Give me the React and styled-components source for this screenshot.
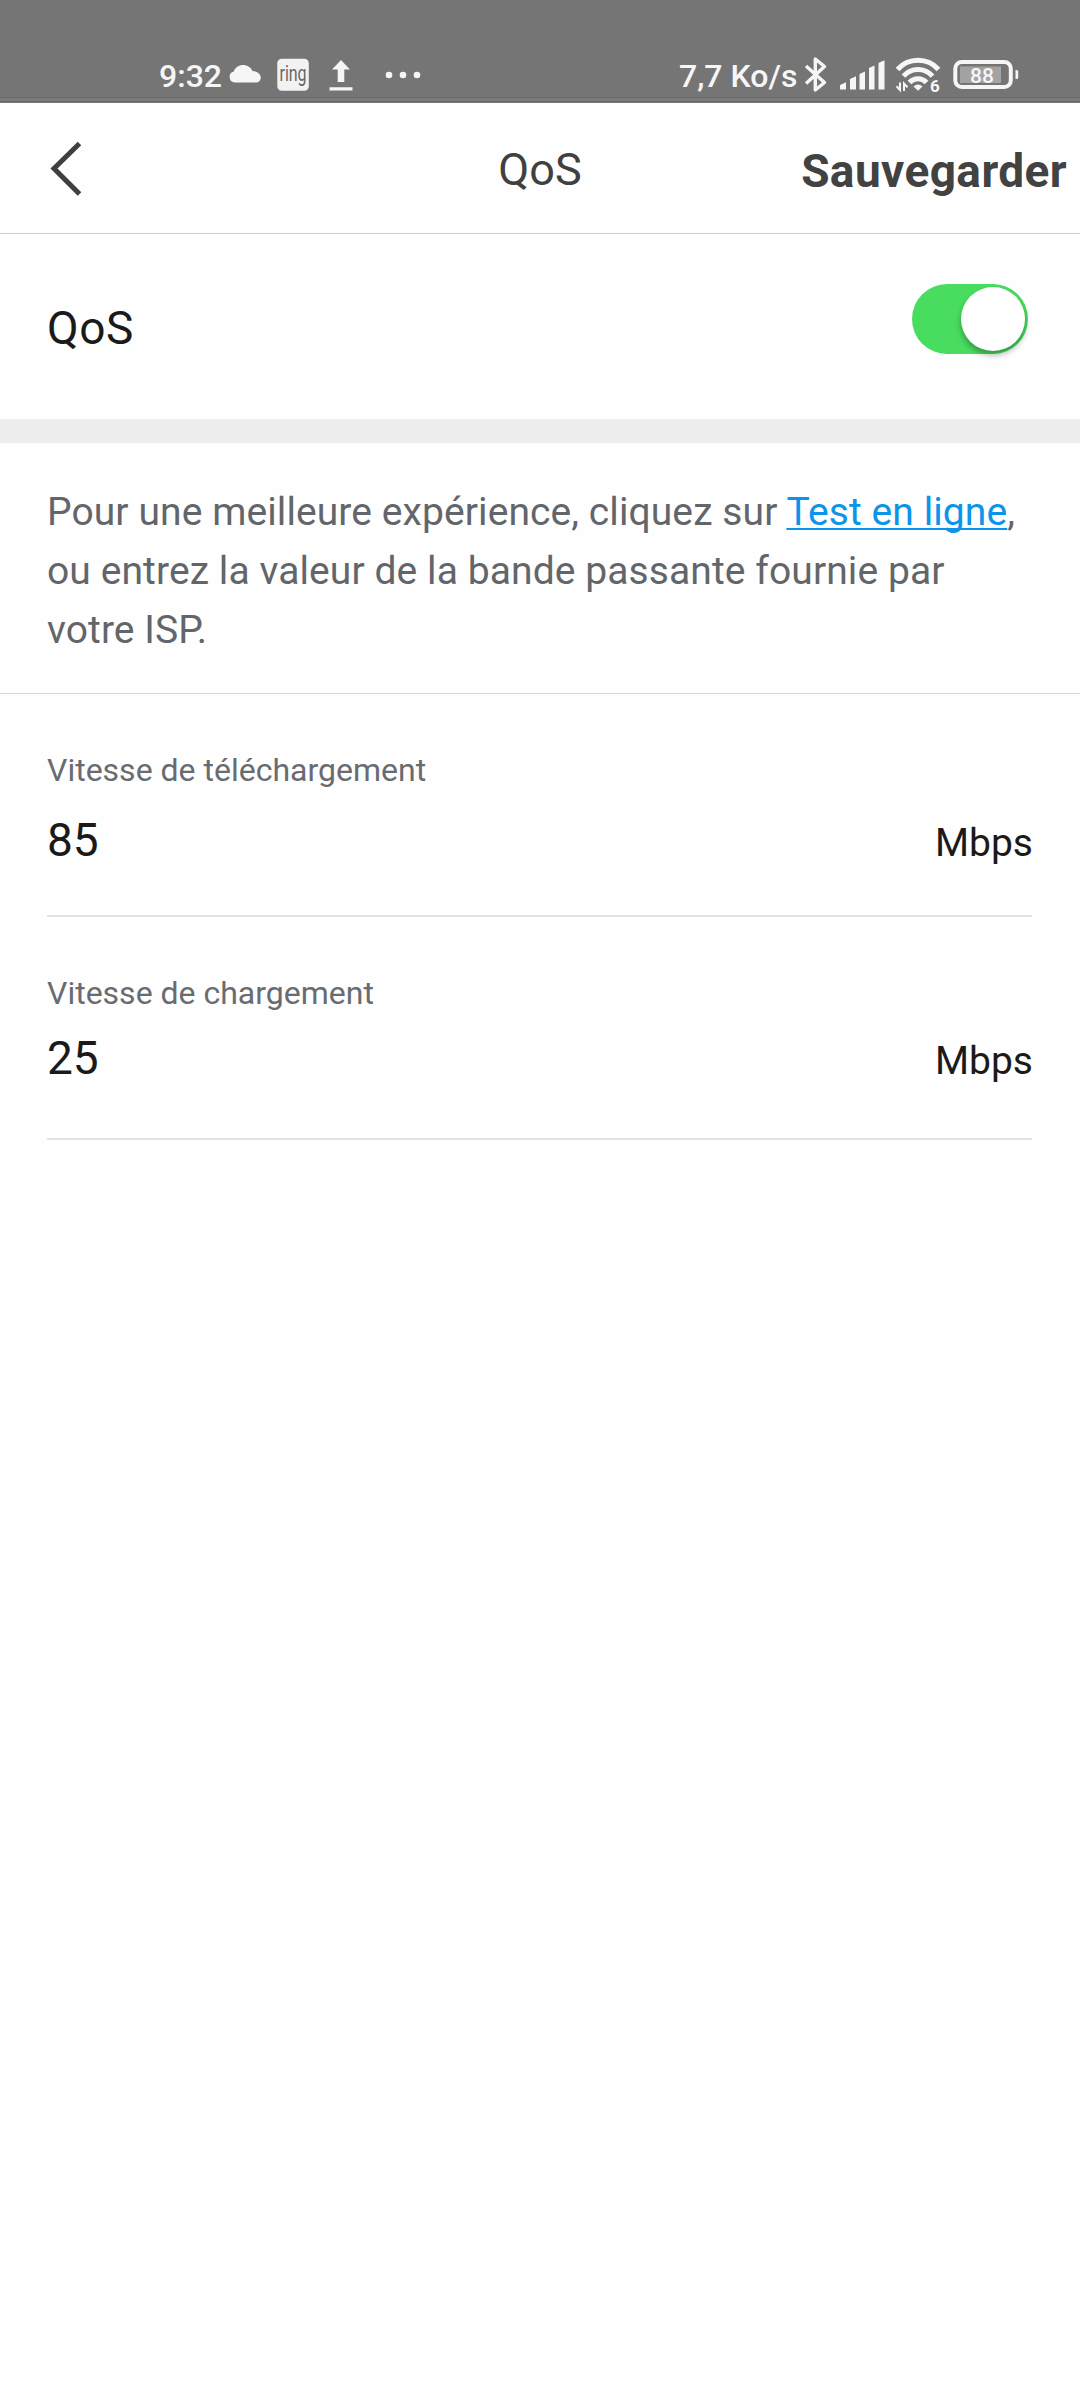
import React, { useState } from "react";
import styled, { createGlobalStyle } from "styled-components";

const GlobalStyle = createGlobalStyle`
  * { box-sizing: border-box; }
  body { margin: 0; background: #fefefe; font-family: Roboto, "Noto Sans", sans-serif; }
`;

const Screen = styled.div`
  display: flex;
  flex-direction: column;
  width: 1080px;
  height: 2400px;
  background: #fefefe;
`;

const StatusBar = styled.header`
  display: flex;
  align-items: flex-start;
  justify-content: space-between;
  height: 103px;
  padding: 0 61px 0 159px;
  color: #f6f6f6;
  background: linear-gradient(#757575 0 97px, #6a6a6a 97px 98px, #7a7a7a 98px 101px, #686868 101px 102px, #777 102px);
`;

const StatusGroup = styled.div`
  display: flex;
  align-items: flex-start;
  height: 100%;
`;

const StatusText = styled.span`
  width: ${({ $width }) => $width}px;
  padding-top: 57px;
  font-size: 32px;
  font-weight: 500;
  line-height: 38px;
  white-space: nowrap;
`;

const StatusIcons = styled.svg`
  display: block;
  flex: none;
  width: ${({ $width }) => $width}px;
  height: 103px;
  fill: currentColor;
`;

const NavBar = styled.nav`
  display: grid;
  grid-template-columns: 1fr auto 1fr;
  align-items: start;
  height: 131px;
  border-bottom: 1px solid #cfcfcf;
`;

const IconButton = styled.button`
  justify-self: start;
  margin: 0 0 0 48px;
  padding: 36px 0 0;
  border: 0;
  background: none;

  svg {
    display: block;
  }
`;

const Title = styled.h1`
  margin: 0;
  padding-top: 40px;
  color: #404040;
  font-size: 45px;
  font-weight: 400;
  line-height: 54px;
`;

const SaveButton = styled.button`
  justify-self: end;
  margin: 0;
  padding: 41px 13px 0 0;
  border: 0;
  background: none;
  color: #424242;
  font: 700 46px/54px Roboto, sans-serif;
  letter-spacing: 0.4px;
`;

const ToggleRow = styled.section`
  display: flex;
  align-items: flex-start;
  justify-content: space-between;
  height: 185px;
  padding: 50px 52px 0 47px;
`;

const RowLabel = styled.span`
  padding-top: 17px;
  color: #1a1a1a;
  font-size: 46px;
  line-height: 54px;
  letter-spacing: 0.5px;
`;

const Switch = styled.button`
  display: flex;
  align-items: center;
  justify-content: ${({ $on }) => ($on ? "flex-end" : "flex-start")};
  width: 116px;
  height: 70px;
  margin: 0;
  padding: 0 3px;
  border: 0;
  border-radius: 35px;
  background: ${({ $on }) => ($on ? "#49dd60" : "#d8d8d8")};
`;

const Knob = styled.span`
  width: 64px;
  height: 64px;
  border-radius: 50%;
  background: #fff;
  box-shadow: 0 4px 6px rgba(0, 0, 0, 0.32);
`;

const Separator = styled.div`
  height: 24px;
  background: #ededed;
`;

const Hint = styled.p`
  height: 251px;
  margin: 0;
  padding: 40px 50px 0 47px;
  border-bottom: 1px solid #d9d9d9;
  color: #62666a;
  font-size: 39px;
  line-height: 59px;
  letter-spacing: 0.09px;
`;

const HintLink = styled.a`
  color: #0c93ea;
  text-decoration: underline;
  text-decoration-thickness: 2px;
  text-decoration-skip-ink: none;
  text-underline-offset: 3px;
`;

const Form = styled.form`
  display: flex;
  flex-direction: column;
  padding: 0 48px 0 47px;
`;

const Field = styled.label`
  display: flex;
  flex-direction: column;
  height: 223px;
  padding-top: 57px;
  border-bottom: 2px solid #e3e3e3;
`;

const FieldLabel = styled.span`
  color: #686c70;
  font-size: 32px;
  line-height: 38px;
`;

const FieldRow = styled.span`
  display: flex;
  align-items: baseline;
  justify-content: space-between;
  margin: ${({ $gap }) => $gap}px -1px 0 0;
  color: #1a1a1a;
`;

const FieldValue = styled.span`
  font-size: 46px;
  line-height: 54px;
`;

const FieldUnit = styled.span`
  font-size: 39px;
  line-height: 54px;
`;

const speeds = [
  { label: "Vitesse de téléchargement", value: "85", gap: 24 },
  { label: "Vitesse de chargement", value: "25", gap: 19 },
];

function NotificationIcons() {
  return (
    <StatusIcons $width={200} viewBox="225 0 200 103">
      <path d="M235 82.500a5.600 5.600 0 0 1-1.200-11C235 67.500 239 65 243 65c4.300 0 8 2.500 9.500 6 4.800.200 8.300 3 8.300 6.500 0 3-2.300 5-5 5z" />
      <rect x="277.300" y="58.700" width="31.500" height="32" rx="4.500" fill="#f2f2f2" />
      <text transform="translate(279.500 80.700) scale(.71 1)" fontSize="22.500" fontWeight="400" fill="#666">ring</text>
      <path d="M341 60l9 9.500h-5.700V82h-6.600V69.500H332zM329.500 87.300h23v3.200h-23z" />
      <circle cx="389" cy="75" r="3.300" />
      <circle cx="403" cy="75" r="3.300" />
      <circle cx="417" cy="75" r="3.300" />
    </StatusIcons>
  );
}

function ConnectivityIcons() {
  return (
    <StatusIcons $width={220} viewBox="799 0 220 103">
      <path d="M806 66L824.500 82.500 815.300 90V59l9.200 7.500L806 83.500" fill="none" stroke="currentColor" strokeWidth="3.400" strokeLinejoin="round" />
      <path d="M840 85l6-2.800V89.500h-6zM850 79l6-2.700V89.500h-6zM859.500 74l5.500-2.600V89.500h-5.500zM869 68l5.500-2.600V89.500H869zM878.500 63l6-2.800V89.500h-6z" />
      <g fill="none" stroke="currentColor" strokeWidth="5">
        <path d="M897.500 69.500a27.500 27.500 0 0 1 41 0" />
        <path d="M903.500 76.200a19 19 0 0 1 29 0" />
        <path d="M909.500 82.500a11.500 11.500 0 0 1 17 0" />
      </g>
      <path d="M913.500 86.500q4.500-4 9 0L918 90.800z" />
      <path d="M900 82.500V90l-3.500-3.800M904 91v-7.500l3.500 3.800" fill="none" stroke="currentColor" strokeWidth="2" />
      <text x="930" y="92" fontSize="17" fontWeight="700">6</text>
      <rect x="955.300" y="62" width="55.500" height="25" rx="6.500" fill="none" stroke="currentColor" strokeWidth="4" />
      <rect x="960" y="66.500" width="41" height="16.500" fill="#a3a3a3" />
      <path d="M1015.500 70h1.200q1.500 0 1.500 1.500v6q0 1.500-1.500 1.500h-1.200z" />
      <text x="982" y="82.500" fontSize="21" fontWeight="500" textAnchor="middle">88</text>
    </StatusIcons>
  );
}

export default function App() {
  const [enabled, setEnabled] = useState(true);

  return (
    <>
      <GlobalStyle />
      <Screen>
        <StatusBar>
          <StatusGroup>
            <StatusText $width={66}>9:32</StatusText>
            <NotificationIcons />
          </StatusGroup>
          <StatusGroup>
            <StatusText $width={120}>7,7 Ko/s</StatusText>
            <ConnectivityIcons />
          </StatusGroup>
        </StatusBar>
        <NavBar>
          <IconButton aria-label="Retour">
            <svg width="36" height="60" viewBox="0 0 36 60" fill="none" stroke="#3f3f3f" strokeWidth="5">
              <path d="M31.500 4.500L6 29.500l25.500 25.500" />
            </svg>
          </IconButton>
          <Title>QoS</Title>
          <SaveButton>Sauvegarder</SaveButton>
        </NavBar>
        <ToggleRow>
          <RowLabel>QoS</RowLabel>
          <Switch
            type="button"
            role="switch"
            aria-checked={enabled}
            $on={enabled}
            onClick={() => setEnabled(!enabled)}
          >
            <Knob />
          </Switch>
        </ToggleRow>
        <Separator />
        <Hint>
          Pour une meilleure expérience, cliquez sur <HintLink>Test en ligne</HintLink>, ou entrez la valeur de la
          bande passante fournie par votre ISP.
        </Hint>
        <Form>
          {speeds.map(({ label, value, gap }) => (
            <Field key={label}>
              <FieldLabel>{label}</FieldLabel>
              <FieldRow $gap={gap}>
                <FieldValue>{value}</FieldValue>
                <FieldUnit>Mbps</FieldUnit>
              </FieldRow>
            </Field>
          ))}
        </Form>
      </Screen>
    </>
  );
}
